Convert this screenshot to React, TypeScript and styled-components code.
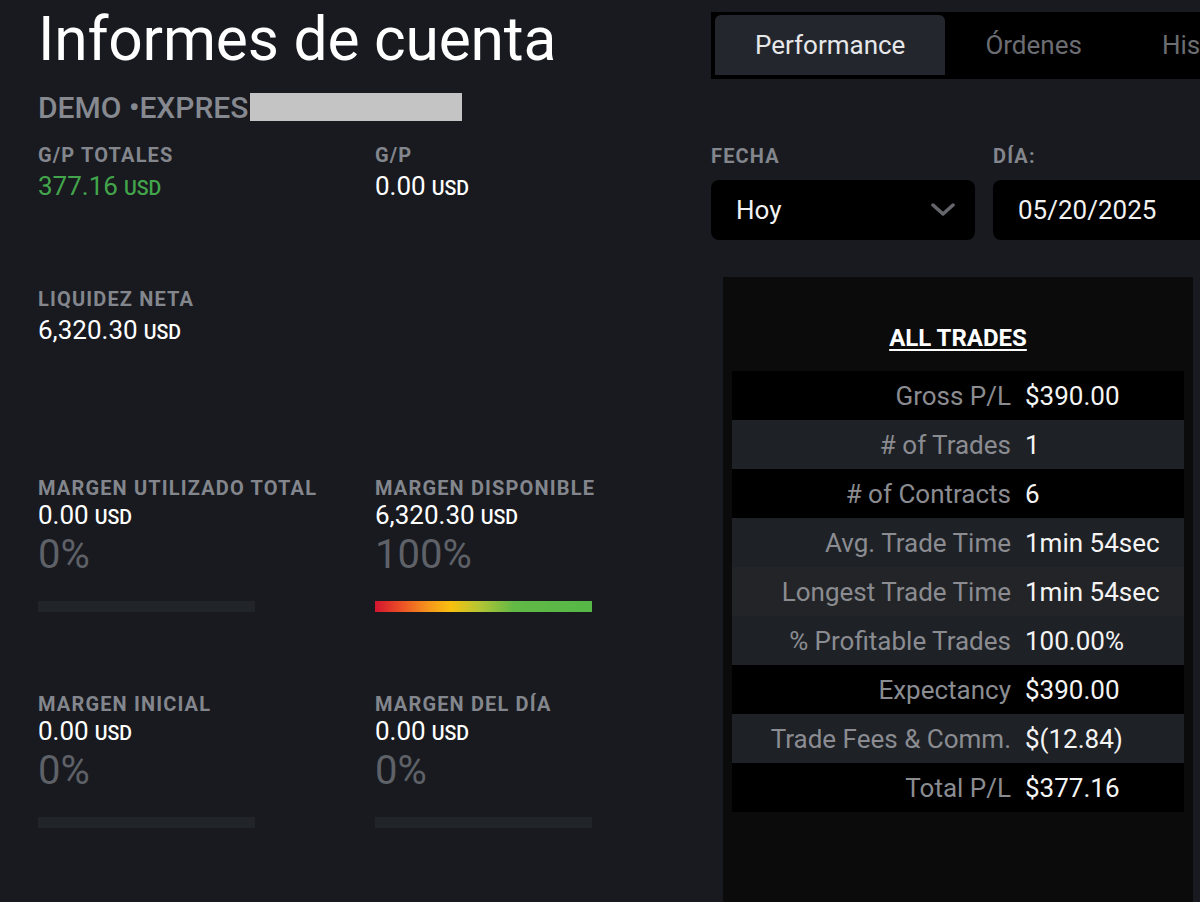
import React from 'react';
import styled, { createGlobalStyle } from 'styled-components';

const GlobalStyle = createGlobalStyle`
  html, body {
    margin: 0;
    padding: 0;
    background: #181a1f;
  }
  body {
    font-family: Roboto, "Noto Sans", "Liberation Sans", sans-serif;
    color: #ffffff;
  }
`;

const Page = styled.div`
  width: 1200px;
  height: 902px;
  overflow: hidden;
  display: flex;
  background: #181a1f;
`;

// Left side: title + account stats
const LeftColumn = styled.section`
  width: 711px;
  flex: none;
  box-sizing: border-box;
  padding: 10px 0 0 38px;
`;

const Title = styled.h1`
  margin: 0;
  font-size: 60.5px;
  line-height: 60px;
  font-weight: 400;
  color: #ffffff;
  letter-spacing: -0.2px;
`;

const AccountLine = styled.div`
  margin-top: 23px;
  display: flex;
  align-items: center;
  height: 28px;
  font-size: 30px;
  font-weight: 500;
  color: #868990;
`;

const Redacted = styled.span`
  display: inline-block;
  width: 212px;
  height: 28px;
  margin-left: 2px;
  background: #c4c4c4;
`;

const StatsGrid = styled.div`
  display: grid;
  grid-template-columns: 337px 337px;
  grid-template-rows: 144px 189px 216px auto;
  margin-top: 24px;
`;

const Stat = styled.div`
  display: flex;
  flex-direction: column;
  align-items: flex-start;
`;

const Label = styled.div`
  font-size: 20px;
  line-height: 20px;
  font-weight: 700;
  letter-spacing: 1.15px;
  color: #83868d;
  text-transform: uppercase;
`;

const Value = styled.div<{ $green?: boolean; $loose?: boolean }>`
  margin-top: ${p => (p.$loose ? '6px' : '2px')};
  font-size: 26px;
  line-height: 30px;
  color: ${p => (p.$green ? '#43a54b' : '#ffffff')};
`;

const Unit = styled.span`
  font-size: 19.5px;
  font-weight: 500;
  margin-left: 6px;
`;

const Percent = styled.div`
  margin-top: 2px;
  font-size: 40px;
  line-height: 40px;
  color: #5e6167;
`;

const MarginBar = styled.div<{ $full?: boolean }>`
  margin-top: 26px;
  width: 217px;
  height: 11px;
  background: ${p =>
    p.$full
      ? 'linear-gradient(90deg, #d3142f 0%, #ec4f26 12%, #f5931c 24%, #f8c10f 35%, #b5c534 48%, #62b946 64%, #56b847 100%)'
      : '#212429'};
`;

// Right side: tabs, filters, summary table
const RightColumn = styled.section`
  flex: 1;
  min-width: 0;
  overflow: hidden;
  padding-top: 12px;
`;

const TabBar = styled.div`
  display: flex;
  width: 560px;
  height: 67px;
  box-sizing: border-box;
  padding: 3px 5px 4px 4px;
  background: #000000;
`;

const Tab = styled.div<{ $active?: boolean }>`
  flex: none;
  padding: 0 40px;
  height: 60px;
  line-height: 60px;
  font-size: 26px;
  white-space: nowrap;
  border-radius: 6px 6px 0 0;
  background: ${p => (p.$active ? '#23262c' : 'transparent')};
  color: ${p => (p.$active ? '#e6e7e9' : '#6b6d72')};
`;

const Filters = styled.div`
  display: flex;
  gap: 18px;
  margin-top: 67px;
  width: 560px;
`;

const FilterGroup = styled.div<{ $width: number }>`
  width: ${p => p.$width}px;
  flex: none;
`;

const FieldBox = styled.div`
  margin-top: 14px;
  height: 60px;
  box-sizing: border-box;
  padding: 0 20px 0 25px;
  display: flex;
  align-items: center;
  justify-content: space-between;
  background: #000000;
  border-radius: 8px;
  font-size: 26px;
  color: #f2f2f2;
`;

const Panel = styled.div`
  margin: 37px 0 0 12px;
  width: 470px;
  height: 640px;
  box-sizing: border-box;
  padding: 46px 9px 0;
  background: #0b0b0c;
`;

const PanelTitle = styled.div`
  text-align: center;
  font-size: 24px;
  line-height: 30px;
  font-weight: 700;
  text-decoration: underline;
  text-underline-offset: 3px;
  text-decoration-thickness: 2px;
  color: #ffffff;
`;

const Table = styled.div`
  margin-top: 18px;
`;

const Row = styled.div<{ $bg: string }>`
  display: grid;
  grid-template-columns: 279px 1fr;
  column-gap: 14px;
  align-items: center;
  height: 49px;
  background: ${p => p.$bg};
  font-size: 26px;
`;

const RowLabel = styled.div`
  text-align: right;
  color: #8a8c91;
  white-space: nowrap;
`;

const RowValue = styled.div`
  color: #f4f4f4;
  white-space: nowrap;
`;

const Chevron = () => (
  <svg width="24" height="14" viewBox="0 0 24 14">
    <polyline points="2,2 12,11 22,2" fill="none" stroke="#64666b" strokeWidth="3.5" strokeLinecap="round" strokeLinejoin="round" />
  </svg>
);

const BLACK = '#000000';
const GREY = '#1e2126';
const GREY2 = '#232427';

const trades: { label: string; value: string; bg: string }[] = [
  { label: 'Gross P/L', value: '$390.00', bg: BLACK },
  { label: '# of Trades', value: '1', bg: GREY },
  { label: '# of Contracts', value: '6', bg: BLACK },
  { label: 'Avg. Trade Time', value: '1min 54sec', bg: GREY },
  { label: 'Longest Trade Time', value: '1min 54sec', bg: GREY2 },
  { label: '% Profitable Trades', value: '100.00%', bg: GREY },
  { label: 'Expectancy', value: '$390.00', bg: BLACK },
  { label: 'Trade Fees & Comm.', value: '$(12.84)', bg: GREY },
  { label: 'Total P/L', value: '$377.16', bg: BLACK },
];

export default function App() {
  return (
    <>
      <GlobalStyle />
      <Page>
        <LeftColumn>
          <Title>Informes de cuenta</Title>
          <AccountLine>
            DEMO •EXPRES
            <Redacted />
          </AccountLine>

          <StatsGrid>
            <Stat>
              <Label>G/P totales</Label>
              <Value $green $loose>377.16<Unit>USD</Unit></Value>
            </Stat>
            <Stat>
              <Label>G/P</Label>
              <Value $loose>0.00<Unit>USD</Unit></Value>
            </Stat>

            <Stat>
              <Label>Liquidez neta</Label>
              <Value $loose>6,320.30<Unit>USD</Unit></Value>
            </Stat>
            <div />

            <Stat>
              <Label>Margen utilizado total</Label>
              <Value>0.00<Unit>USD</Unit></Value>
              <Percent>0%</Percent>
              <MarginBar />
            </Stat>
            <Stat>
              <Label>Margen disponible</Label>
              <Value>6,320.30<Unit>USD</Unit></Value>
              <Percent>100%</Percent>
              <MarginBar $full />
            </Stat>

            <Stat>
              <Label>Margen inicial</Label>
              <Value>0.00<Unit>USD</Unit></Value>
              <Percent>0%</Percent>
              <MarginBar />
            </Stat>
            <Stat>
              <Label>Margen del día</Label>
              <Value>0.00<Unit>USD</Unit></Value>
              <Percent>0%</Percent>
              <MarginBar />
            </Stat>
          </StatsGrid>
        </LeftColumn>

        <RightColumn>
          <TabBar>
            <Tab $active>Performance</Tab>
            <Tab>Órdenes</Tab>
            <Tab>Historial</Tab>
          </TabBar>

          <Filters>
            <FilterGroup $width={264}>
              <Label>Fecha</Label>
              <FieldBox>
                <span>Hoy</span>
                <Chevron />
              </FieldBox>
            </FilterGroup>
            <FilterGroup $width={264}>
              <Label>Día:</Label>
              <FieldBox>
                <span>05/20/2025</span>
              </FieldBox>
            </FilterGroup>
          </Filters>

          <Panel>
            <PanelTitle>ALL TRADES</PanelTitle>
            <Table>
              {trades.map(t => (
                <Row key={t.label} $bg={t.bg}>
                  <RowLabel>{t.label}</RowLabel>
                  <RowValue>{t.value}</RowValue>
                </Row>
              ))}
            </Table>
          </Panel>
        </RightColumn>
      </Page>
    </>
  );
}
